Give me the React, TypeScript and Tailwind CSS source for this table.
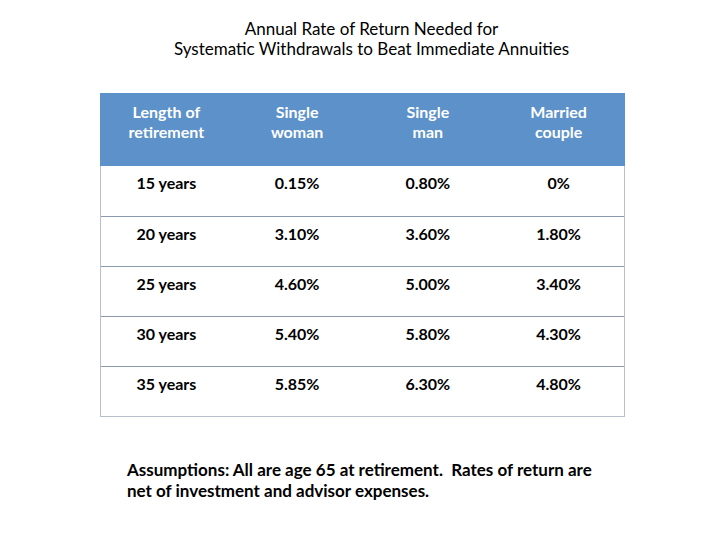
const headers = [
  ["Length of", "retirement"],
  ["Single", "woman"],
  ["Single", "man"],
  ["Married", "couple"],
];

const rows = [
  ["15 years", "0.15%", "0.80%", "0%"],
  ["20 years", "3.10%", "3.60%", "1.80%"],
  ["25 years", "4.60%", "5.00%", "3.40%"],
  ["30 years", "5.40%", "5.80%", "4.30%"],
  ["35 years", "5.85%", "6.30%", "4.80%"],
];

export default function App() {
  return (
    <div className="w-[720px] h-[540px] bg-white text-black font-['Lato',sans-serif] overflow-hidden">
      {/* Title */}
      <div className="pt-[19px] text-center text-[17px] leading-[20px] pl-[23px]">
        <p>Annual Rate of Return Needed for</p>
        <p>Systematic Withdrawals to Beat Immediate Annuities</p>
      </div>

      {/* Table */}
      <div className="ml-[100px] mt-[34px] w-[525px] border-x border-b border-[#b7bfcc]">
        <div className="grid grid-cols-4 h-[73px] bg-[#5d91c9] text-white font-bold text-[16px] leading-[20px] pt-[9px] -mx-px px-px">
          {headers.map((h, i) => (
            <div key={i} className="text-center">
              <p>{h[0]}</p>
              <p>{h[1]}</p>
            </div>
          ))}
        </div>
        {rows.map((r, i) => (
          <div
            key={i}
            className={`grid grid-cols-4 h-[50px] pt-[7px] font-bold text-[16px] leading-[20px] ${i > 0 ? "border-t border-[#8c9ab0]" : ""}`}
          >
            {r.map((c, j) => (
              <div key={j} className="text-center">{c}</div>
            ))}
          </div>
        ))}
      </div>

      {/* Footnote */}
      <div className="ml-[127px] mt-[42px] font-bold text-[17px] leading-[21px]">
        <p>Assumptions: All are age 65 at retirement.&nbsp; Rates of return are</p>
        <p>net of investment and advisor expenses.</p>
      </div>
    </div>
  );
}
